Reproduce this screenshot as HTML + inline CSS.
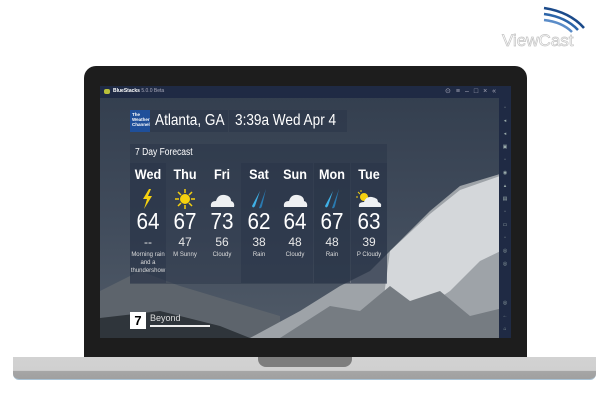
<!DOCTYPE html>
<html><head><meta charset="utf-8"><style>
*{margin:0;padding:0;box-sizing:border-box}
body{width:602px;height:414px;background:#fff;position:relative;overflow:hidden;font-family:"Liberation Sans",sans-serif}
.abs{position:absolute}
.col{position:absolute;top:163px;width:36px;height:120px;text-align:center;color:#fff}
.col .d{font-size:14px;font-weight:bold;margin-top:3px;transform:scaleX(.9)}
.col .h{font-size:23px;margin-top:27px;line-height:24px;transform:scaleX(.9)}
.col .l{font-size:12px;line-height:14px;margin-top:2px;color:#e8e8e8}
.col .t{font-size:6px;line-height:8px;color:#ddd;margin-top:2px;white-space:nowrap}
.dk{background:rgba(40,52,70,.45)}
.ic{position:absolute;top:25px;left:0;width:36px;height:22px}
.hd{white-space:nowrap;display:inline-block;transform:scaleX(.85);transform-origin:left}
</style></head><body>
<!-- ViewCast logo -->
<svg class="abs" style="left:500px;top:4px" width="100" height="48" viewBox="0 0 100 48">
<path d="M44 4 Q70 8 84 24" stroke="#1b4a8a" stroke-width="2.5" fill="none"/>
<path d="M44 10 Q66 13 78 26" stroke="#2b64a8" stroke-width="2.5" fill="none"/>
<path d="M44 16 Q62 18 72 28" stroke="#5a8cc8" stroke-width="2.5" fill="none"/>
<text x="2" y="42" font-family="Liberation Sans" font-size="17" fill="#fff" stroke="#c4c4c4" stroke-width=".7">ViewCast</text>
</svg>
<!-- lid -->
<div class="abs" style="left:84px;top:66px;width:443px;height:295px;background:#1d1d1d;border-radius:12px 12px 0 0"></div>
<!-- screen -->
<div class="abs" style="left:100px;top:86px;width:411px;height:252px;overflow:hidden;background:linear-gradient(#333e4e,#414c5c 55%,#515b68)">
<svg class="abs" style="left:0;top:0" width="411" height="252" viewBox="0 0 411 252">
<path d="M0 205 L40 185 L80 200 L130 215 L180 230 L180 252 L0 252Z" fill="#5d646c"/>
<path d="M150 252 L200 225 L240 200 L270 185 L300 155 L330 125 L360 100 L400 88 L411 90 L411 252Z" fill="#9ea3a8"/>
<path d="M290 165 L330 128 L360 104 L400 90 L411 92 L411 160 L380 175 L350 205 L320 225 L280 240Z" fill="#d4d7da"/>
<path d="M180 252 L230 220 L260 225 L290 200 L310 215 L340 205 L370 230 L411 220 L411 252Z" fill="#767c82"/>
<path d="M0 232 L60 225 L120 240 L150 252 L0 252Z" fill="#2f353b"/>
</svg>
<!-- title bar -->
<div class="abs" style="left:0;top:0;width:411px;height:12px;background:#1f2a44"></div>
<div class="abs" style="left:4px;top:3px;width:6px;height:5px;background:#b9c03a;border-radius:2px"></div>
<div class="abs" style="left:13px;top:2px;font-size:5px;color:#fff;font-weight:bold">BlueStacks <span style="font-weight:normal;color:#aab">5.0.0 Beta</span></div>
<div class="abs" style="left:345px;top:1px;font-size:7px;color:#aab;letter-spacing:5px">⊙≡–□×«</div>
<div class="abs" style="left:399px;top:12px;width:12px;height:240px;background:#1f2a44"></div>
<div class="abs" style="left:402px;top:16px;width:6px;font-size:5px;line-height:13px;color:#9aa;text-align:center">▫<br>◂<br>◂<br>▣<br>▫<br>◉<br>▴<br>▤<br>▫<br>▭<br>▫<br>◎<br>◎<br><br><br>◎<br>←<br>⌂<br>▣</div>
</div>
<!-- header -->
<div class="abs" style="left:130px;top:110px;width:20px;height:22px;background:#1f4f9a;color:#fff;font-size:4.5px;font-weight:bold;line-height:5px;padding:2px">The<br>Weather<br>Channel</div>
<div class="abs dk" style="left:150px;top:110px;width:78px;height:22px;color:#fff;font-size:16px;padding:2px 0 0 5px"><span class="hd">Atlanta, GA</span></div>
<div class="abs dk" style="left:229px;top:110px;width:118px;height:22px;color:#fff;font-size:16px;padding:2px 0 0 6px"><span class="hd">3:39a Wed Apr 4</span></div>
<!-- panel -->
<div class="abs dk" style="left:130px;top:144px;width:257px;height:140px"></div>
<div class="abs" style="left:135px;top:147px;font-size:10px;color:#fff"><span class="hd">7 Day Forecast</span></div>
<div class="col dk" style="left:130px"><div class="d">Wed</div>
<svg class="ic" viewBox="0 0 36 22"><path d="M19 1 L13 11 L17 11 L14 21 L22 8 L18 8 L21 1Z" fill="#f5d10f"/></svg>
<div class="h">64</div><div class="l">--</div><div class="t">Morning rain<br>and a<br>thundershow</div></div>
<div class="col" style="left:167px"><div class="d">Thu</div>
<svg class="ic" viewBox="0 0 36 22"><circle cx="18" cy="11" r="5" fill="#f5d10f"/><g stroke="#f5d10f" stroke-width="1.5"><path d="M18 1v4M18 17v4M8 11h4M24 11h4M11 4l3 3M22 15l3 3M25 4l-3 3M14 15l-3 3"/></g></svg>
<div class="h">67</div><div class="l">47</div><div class="t">M Sunny</div></div>
<div class="col" style="left:204px"><div class="d">Fri</div>
<svg class="ic" viewBox="0 0 36 22"><path d="M7 19 Q6 13 12 13 Q14 6 21 7 Q27 8 27 13 Q31 14 30 19Z" fill="#eef0f2"/></svg>
<div class="h">73</div><div class="l">56</div><div class="t">Cloudy</div></div>
<div class="col dk" style="left:241px"><div class="d">Sat</div>
<svg class="ic" viewBox="0 0 36 22"><path d="M19 3 L11 18 Q12 21 14 18Z" fill="#3fb0e6"/><path d="M25 1 L18 20 Q20 21 21 18Z" fill="#2a7ab0"/></svg>
<div class="h">62</div><div class="l">38</div><div class="t">Rain</div></div>
<div class="col dk" style="left:277px"><div class="d">Sun</div>
<svg class="ic" viewBox="0 0 36 22"><path d="M7 19 Q6 13 12 13 Q14 6 21 7 Q27 8 27 13 Q31 14 30 19Z" fill="#eef0f2"/></svg>
<div class="h">64</div><div class="l">48</div><div class="t">Cloudy</div></div>
<div class="col" style="left:314px;background:rgba(40,52,70,.6)"><div class="d">Mon</div>
<svg class="ic" viewBox="0 0 36 22"><path d="M19 3 L11 18 Q12 21 14 18Z" fill="#3fb0e6"/><path d="M25 1 L18 20 Q20 21 21 18Z" fill="#2a7ab0"/></svg>
<div class="h">67</div><div class="l">48</div><div class="t">Rain</div></div>
<div class="col dk" style="left:351px"><div class="d">Tue</div>
<svg class="ic" viewBox="0 0 36 22"><circle cx="13" cy="9" r="4" fill="#f5d10f"/><path d="M10 2v2M5 9h2M7 4l2 2" stroke="#f5d10f"/><path d="M8 19 Q7 14 13 14 Q15 8 21 9 Q27 10 27 14 Q31 15 30 19Z" fill="#eef0f2"/></svg>
<div class="h">63</div><div class="l">39</div><div class="t">P Cloudy</div></div>
<!-- bottom -->
<div class="abs" style="left:130px;top:312px;width:16px;height:17px;background:#fff;color:#000;font-size:13px;font-weight:bold;text-align:center;line-height:18px">7</div>
<div class="abs" style="left:150px;top:313px;font-size:9px;color:#ddd">Beyond</div>
<div class="abs" style="left:150px;top:325px;width:60px;height:2px;background:#eee"></div>
<!-- base -->
<div class="abs" style="left:13px;top:357px;width:583px;height:23px;background:linear-gradient(#d2d2d2 0,#d0d0d0 62%,#a6a6a6 64%,#a0a0a0);border-radius:0 0 6px 6px;border-bottom:1px solid #a9c3d6"></div>
<div class="abs" style="left:258px;top:357px;width:94px;height:10px;background:#7d7d7d;border-radius:0 0 8px 8px"></div>
</body></html>
